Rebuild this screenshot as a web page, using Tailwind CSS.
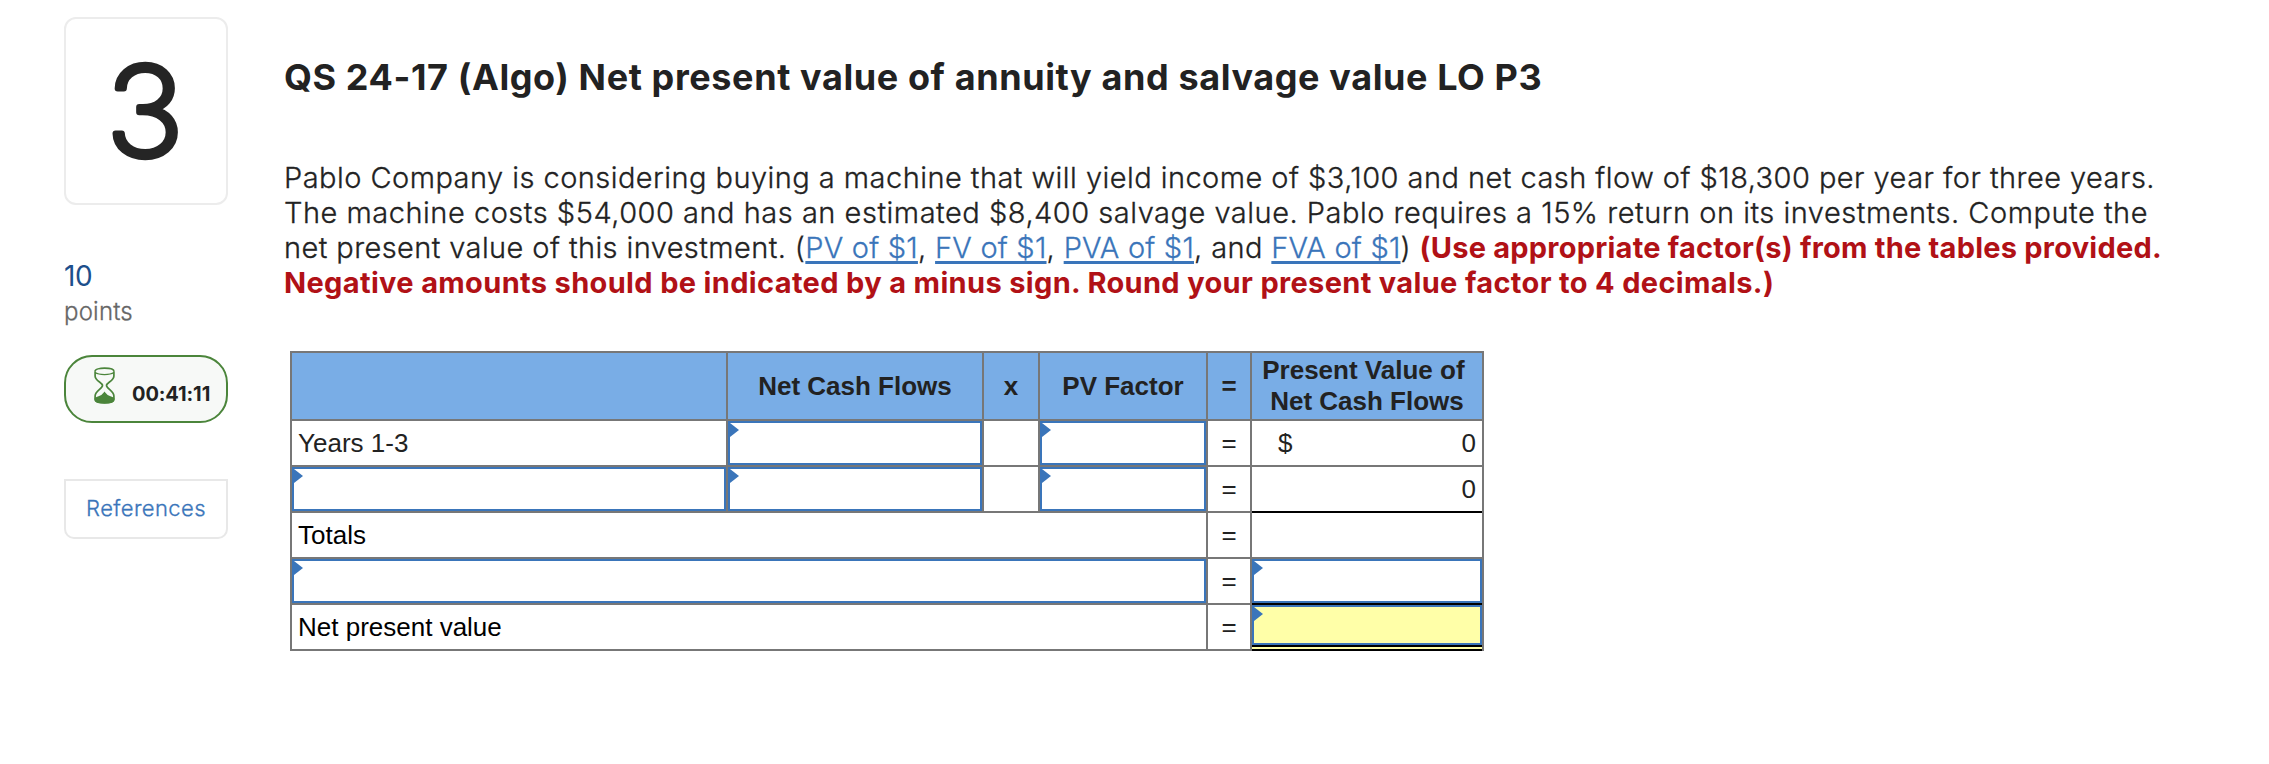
<!DOCTYPE html>
<html lang="en">
<head>
<meta charset="utf-8">
<title>Question 3</title>
<script src="https://cdn.jsdelivr.net/npm/@tailwindcss/browser@4"></script>
</head>
<body class="bg-white text-[#222] font-['Inter',sans-serif] h-[764px] overflow-hidden">
<main class="flex items-start pl-16 pt-[17px]">
  <aside class="w-[164px] flex flex-col">
    <div class="h-[188px] rounded-xl border-2 border-[#ececec]">
      <svg class="w-full h-full" viewBox="0 0 160 184"><text transform="translate(79 137) scale(1.05 1)" x="0" y="0" text-anchor="middle" font-size="124" font-weight="200" fill="#252525" stroke="#252525" stroke-width="6" stroke-linejoin="round" class="font-['Inter',sans-serif]">3</text></svg>
    </div>
    <div class="mt-[54px] text-[28px] leading-[34px] tracking-[-0.5px] text-[#1d4f8c]">10</div>
    <div class="mt-[4px] text-[24px] leading-[30px] font-light tracking-[0.2px] text-[#666] [-webkit-text-stroke:0.3px]">points</div>
    <div class="mt-[28px] h-[68px] rounded-[28px] border-2 border-[#4b853b] bg-[#f7f9f7] flex">
      <svg class="ml-7 mt-[10px] w-[21px] h-[37px] shrink-0" viewBox="0 0 21 37" fill="none" stroke="#4b853b" stroke-width="1.7">
        <path d="M1.1 4.2C1.100 0.200 19.900 0.200 19.900 4.200"/>
        <path d="M1.100 5.500C5 8.200 16 8.200 19.900 5.500" stroke-width="1.2"/>
        <path d="M1.1 4.2V9C1.1 14 8.5 15.500 8.500 18.500C8.500 21.500 1.100 24 1.100 29V32.500C1.100 37 19.900 37 19.900 32.500V29C19.900 24 12.500 21.500 12.500 18.500C12.500 15.500 19.900 14 19.900 9V4.200"/>
        <path d="M1.500 31.500C5 29.500 8 30 10.500 26C13 30 16 29.500 19.500 31.500V33C19.500 36.500 1.500 36.500 1.500 33Z" fill="#4b853b"/>
      </svg>
      <span class="ml-[17px] mt-[25px] text-[20px] leading-6 font-bold tracking-[-0.1px]">00:41:11</span>
    </div>
    <div class="mt-14 h-[60px] rounded-b-[10px] border-2 border-[#e8e8e8] flex justify-center pt-[13px] text-[22px] leading-[28px] font-light tracking-[0.4px] text-[#3a75ba] [-webkit-text-stroke:0.3px]">References</div>
  </aside>

  <section class="ml-[56px] pt-[38px]">
    <h1 class="text-[36px] leading-[44px] font-bold tracking-[0.6px] whitespace-nowrap">QS 24-17 (Algo) Net present value of annuity and salvage value LO P3</h1>
    <div class="mt-[61px] text-[29px] leading-[35px] font-light whitespace-nowrap">
      <div class="tracking-[0.453px] [-webkit-text-stroke:0.3px]">Pablo Company is considering buying a machine that will yield income of $3,100 and net cash flow of $18,300 per year for three years.</div>
      <div class="tracking-[0.511px] [-webkit-text-stroke:0.3px]">The machine costs $54,000 and has an estimated $8,400 salvage value. Pablo requires a 15% return on its investments. Compute the</div>
      <div class="tracking-[0.4px]"><span class="[-webkit-text-stroke:0.3px]">net present value of this investment. (<a class="text-[#3a75ba] underline decoration-[3px] underline-offset-[3px] tracking-[0.2px]">PV of $1</a>, <a class="text-[#3a75ba] underline decoration-[3px] underline-offset-[3px] tracking-[0.2px]">FV of $1</a>, <a class="text-[#3a75ba] underline decoration-[3px] underline-offset-[3px] tracking-[0.2px]">PVA of $1</a>, and <a class="text-[#3a75ba] underline decoration-[3px] underline-offset-[3px] tracking-[0.2px]">FVA of $1</a>) </span><b class="font-bold text-[#b11116] tracking-[0.23px]">(Use appropriate factor(s) from the tables provided.</b></div>
      <div class="font-bold text-[#b11116] tracking-[0.345px]">Negative amounts should be indicated by a minus sign. Round your present value factor to 4 decimals.)</div>
    </div>

    <div class="mt-[51px] ml-[6px] w-[1194px] h-[300px] grid grid-cols-[434px_254px_54px_166px_42px_230px] grid-rows-[66px_44px_44px_44px_44px_44px] gap-[2px] p-[2px] bg-[#777] font-['Liberation_Sans',sans-serif] text-[26px] leading-[31px] [&>div]:bg-white">
      <div class="!bg-[#79ade6]"></div>
      <div class="!bg-[#79ade6] font-bold flex items-center justify-center">Net Cash Flows</div>
      <div class="!bg-[#79ade6] font-bold flex items-center justify-center">x</div>
      <div class="!bg-[#79ade6] font-bold flex items-center justify-center">PV Factor</div>
      <div class="!bg-[#79ade6] font-bold flex items-center justify-center">=</div>
      <div class="!bg-[#79ade6] font-bold flex items-center justify-center text-center whitespace-pre pb-px">Present Value of 
Net Cash Flows</div>

      <div class="pl-[6px] flex items-center">Years 1-3</div>
      <div class="border-2 border-[#3a75ba]"><svg class="w-[9px] h-[14px]" viewBox="0 0 9 14"><path d="M0 0L9 7L0 14Z" fill="#3a75ba"/></svg></div>
      <div></div>
      <div class="border-2 border-[#3a75ba]"><svg class="w-[9px] h-[14px]" viewBox="0 0 9 14"><path d="M0 0L9 7L0 14Z" fill="#3a75ba"/></svg></div>
      <div class="flex items-center justify-center">=</div>
      <div class="pl-[26px] pr-[6px] flex items-center justify-between"><span>$</span><span>0</span></div>

      <div class="border-2 border-[#3a75ba]"><svg class="w-[9px] h-[14px]" viewBox="0 0 9 14"><path d="M0 0L9 7L0 14Z" fill="#3a75ba"/></svg></div>
      <div class="border-2 border-[#3a75ba]"><svg class="w-[9px] h-[14px]" viewBox="0 0 9 14"><path d="M0 0L9 7L0 14Z" fill="#3a75ba"/></svg></div>
      <div></div>
      <div class="border-2 border-[#3a75ba]"><svg class="w-[9px] h-[14px]" viewBox="0 0 9 14"><path d="M0 0L9 7L0 14Z" fill="#3a75ba"/></svg></div>
      <div class="flex items-center justify-center">=</div>
      <div class="pr-[6px] flex items-center justify-end shadow-[0_2px_0_#000]">0</div>

      <div class="col-span-4 pl-[6px] flex items-center text-black">Totals</div>
      <div class="flex items-center justify-center">=</div>
      <div></div>

      <div class="col-span-4 border-2 border-[#3a75ba]"><svg class="w-[9px] h-[14px]" viewBox="0 0 9 14"><path d="M0 0L9 7L0 14Z" fill="#3a75ba"/></svg></div>
      <div class="flex items-center justify-center">=</div>
      <div class="border-2 border-[#3a75ba] shadow-[0_2px_0_#000]"><svg class="w-[9px] h-[14px]" viewBox="0 0 9 14"><path d="M0 0L9 7L0 14Z" fill="#3a75ba"/></svg></div>

      <div class="col-span-4 pl-[6px] flex items-center text-black">Net present value</div>
      <div class="flex items-center justify-center">=</div>
      <div class="!bg-[#ffffa8] shadow-[0_2px_0_#000]">
        <div class="h-[42px] border-b-2 border-black"><div class="h-[40px] border-2 border-[#3a75ba]"><svg class="w-[9px] h-[14px]" viewBox="0 0 9 14"><path d="M0 0L9 7L0 14Z" fill="#3a75ba"/></svg></div></div>
      </div>
    </div>
  </section>
</main>
</body>
</html>
